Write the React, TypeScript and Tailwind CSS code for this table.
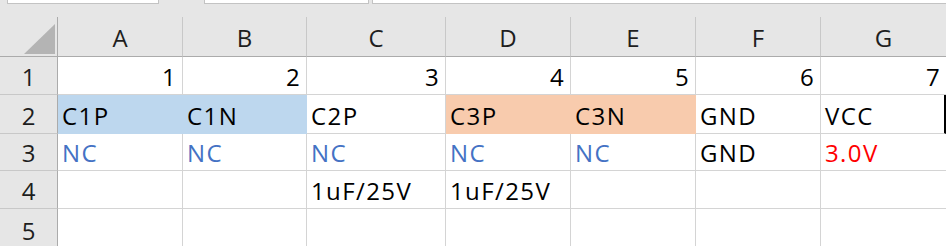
import React from "react";

type Cell = {
  text?: string;
  align?: "left" | "right";
  fill?: "blue" | "orange";
  color?: "blue" | "red";
  edge?: boolean;
};

const COLS = ["A", "B", "C", "D", "E", "F", "G"];

// same track sizes for every row so the lines stay aligned
const GRID =
  "grid grid-cols-[58px_125px_124px_139px_125px_125px_125px_1fr]";

const num = (n: number): Cell => ({ text: String(n), align: "right" });

const ROWS: { height: string; cells: Cell[] }[] = [
  { height: "h-[38px]", cells: [1, 2, 3, 4, 5, 6, 7].map(num) },
  {
    height: "h-[39px]",
    cells: [
      { text: "C1P", fill: "blue" },
      { text: "C1N", fill: "blue" },
      { text: "C2P" },
      { text: "C3P", fill: "orange" },
      { text: "C3N", fill: "orange" },
      { text: "GND" },
      { text: "VCC", edge: true },
    ],
  },
  {
    height: "h-[37px]",
    cells: [
      { text: "NC", color: "blue" },
      { text: "NC", color: "blue" },
      { text: "NC", color: "blue" },
      { text: "NC", color: "blue" },
      { text: "NC", color: "blue" },
      { text: "GND" },
      { text: "3.0V", color: "red" },
    ],
  },
  {
    height: "h-[38px]",
    cells: [
      {},
      {},
      { text: "1uF/25V" },
      { text: "1uF/25V" },
      {},
      {},
      {},
    ],
  },
  { height: "h-[40px]", cells: [{}, {}, {}, {}, {}, {}, {}] },
];

function SheetCell({ cell, last }: { cell: Cell; last: boolean }) {
  const fill =
    cell.fill === "blue"
      ? "bg-[#bdd7ee] border-[#bdd7ee]"
      : cell.fill === "orange"
        ? "bg-[#f8cbad] border-[#f8cbad]"
        : "bg-white border-[#d4d4d4]";
  const color =
    cell.color === "blue"
      ? "text-[#4472c4]"
      : cell.color === "red"
        ? "text-[#ff0000]"
        : "text-black";
  return (
    <div
      className={`flex items-end overflow-hidden whitespace-nowrap border-b pb-[5px] tracking-[1.4px] ${fill} ${color} ${
        last ? "" : "border-r"
      } ${cell.edge ? "border-r-2 !border-r-black" : ""} ${
        cell.align === "right" ? "justify-end pr-[5px]" : "justify-start pl-[4px]"
      }`}
    >
      {cell.text}
    </div>
  );
}

export default function App() {
  return (
    <div className="w-[946px] h-[246px] overflow-hidden bg-[#e6e6e6] font-['Open_Sans',sans-serif] text-[24px] leading-none">
      {/* name box / formula bar edges */}
      <div className="flex h-[4px]">
        <div className="ml-[7px] w-[152px] bg-white border border-t-0 border-[#c3c3c3]" />
        <div className="ml-[45px] w-[165px] bg-white border border-t-0 border-[#c3c3c3]" />
        <div className="ml-[3px] flex-1 bg-white border border-t-0 border-r-0 border-[#c3c3c3]" />
      </div>

      {/* column headers */}
      <div className={`${GRID} pt-[13px]`}>
        <div className="relative h-[40px] border-b border-r border-[#ababab]">
          <svg
            className="absolute left-[24px] top-[7px]"
            width="31"
            height="30"
            viewBox="0 0 31 30"
          >
            <polygon points="31,0 31,30 0,30" fill="#b4b4b4" />
          </svg>
        </div>
        {COLS.map((c, i) => (
          <div
            key={c}
            className={`flex h-[40px] items-end justify-center pb-[6px] text-[#1e1e1e] border-b border-b-[#ababab] ${
              i < COLS.length - 1 ? "border-r border-r-[#c8c8c8]" : ""
            }`}
          >
            {c}
          </div>
        ))}
      </div>

      {/* rows */}
      {ROWS.map((row, r) => (
        <div key={r} className={`${GRID} ${row.height}`}>
          <div className="flex items-end justify-center pb-[5px] text-[#1e1e1e] border-r border-r-[#ababab] border-b border-b-[#c8c8c8]">
            {r + 1}
          </div>
          {row.cells.map((cell, i) => (
            <SheetCell key={i} cell={cell} last={i === row.cells.length - 1} />
          ))}
        </div>
      ))}
    </div>
  );
}
